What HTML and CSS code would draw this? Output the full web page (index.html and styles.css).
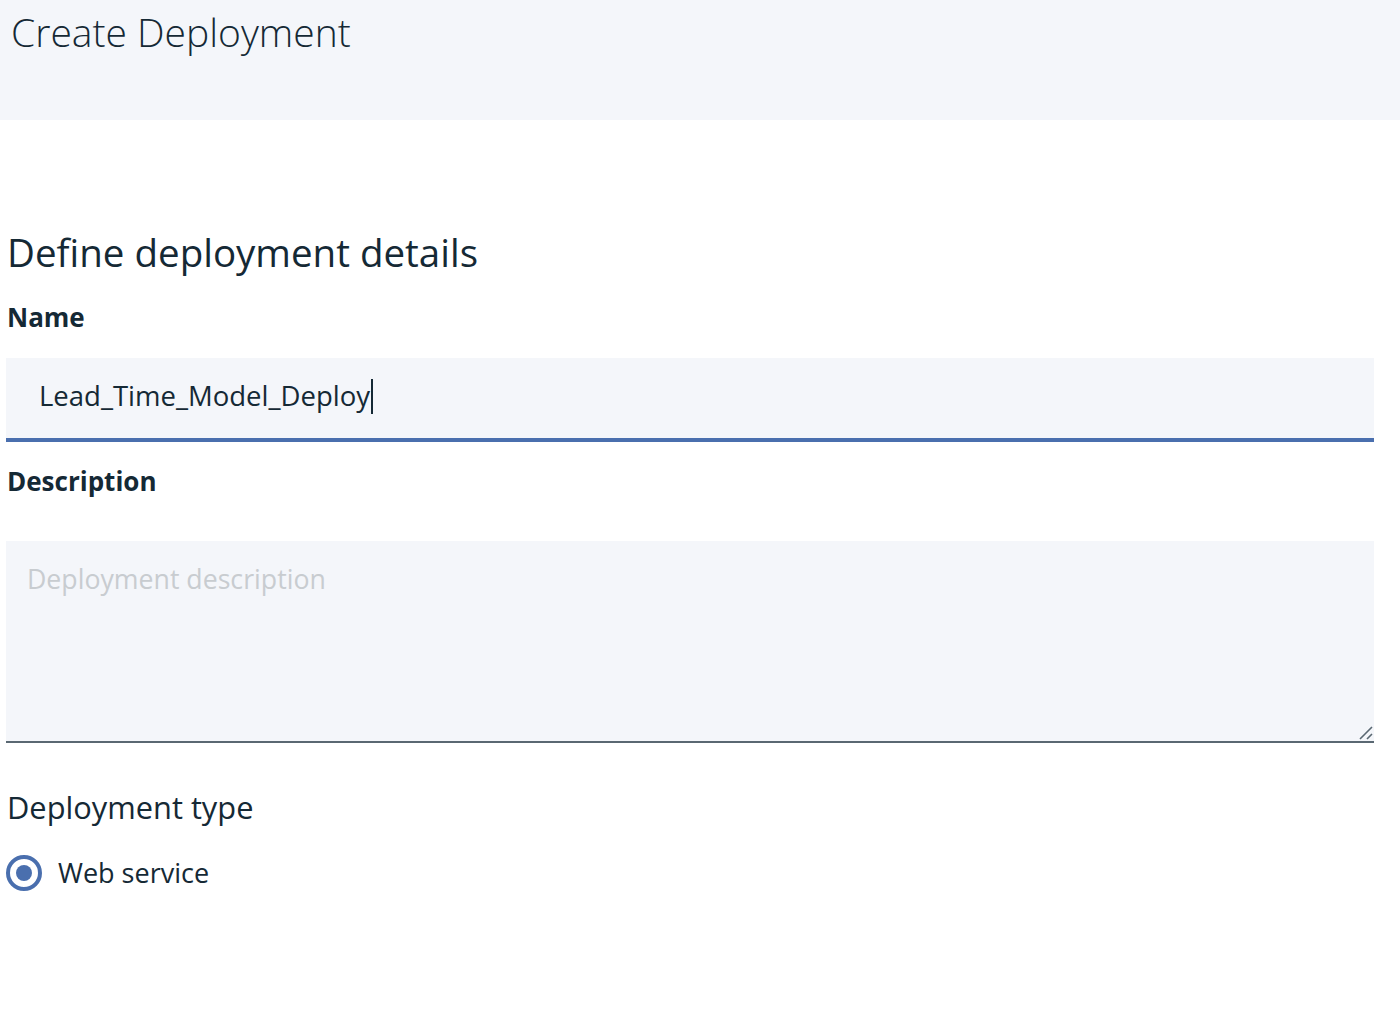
FILE: index.html
```html
<!DOCTYPE html>
<html lang="en">
<head>
<meta charset="utf-8">
<title>Create Deployment</title>
<link rel="stylesheet" href="styles.css">
</head>
<body>
<header class="page-header">
  <h1 class="page-title">Create Deployment</h1>
</header>
<main class="content">
  <h2 class="section-title">Define deployment details</h2>
  <div class="field">
    <label class="field-label" for="name">Name</label>
    <div class="text-input"><span class="input-value">Lead_Time_Model_Deploy</span><span class="caret"></span></div>
  </div>
  <div class="field">
    <label class="field-label" for="desc">Description</label>
    <div class="textarea">
      <span class="placeholder">Deployment description</span>
      <svg class="resize" width="16" height="16" viewBox="0 0 16 16"><path d="M3 15 L15 3 M10 15 L15 10" stroke="#5a6872" stroke-width="1.6" fill="none"/></svg>
    </div>
  </div>
  <h3 class="type-title">Deployment type</h3>
  <div class="radio-row">
    <span class="radio"><span class="radio-dot"></span></span>
    <span class="radio-label">Web service</span>
  </div>
</main>
</body>
</html>
```
FILE: styles.css
```css
* { box-sizing: border-box; }
html, body { margin: 0; padding: 0; background: #ffffff; }
body {
  font-family: "Open Sans", "Noto Sans", "Liberation Sans", sans-serif;
  color: #152935;
  width: 1400px;
  height: 1010px;
  overflow: hidden;
}
.page-header {
  height: 120px;
  background: #f4f6fa;
  padding: 8px 0 0 11px;
}
.page-title {
  margin: 0;
  font-size: 39px;
  font-weight: 300;
  line-height: 48px;
}
.content {
  padding: 106px 26px 0 6px;
}
.section-title {
  margin: 0 0 0 1px;
  font-size: 38.5px;
  font-weight: 400;
  line-height: 52px;
}
.field { display: flex; flex-direction: column; }
.field-label {
  margin: 22px 0 0 1px;
  font-size: 26px;
  font-weight: 700;
  line-height: 34px;
  height: 38px;
}
.text-input {
  margin-top: 20px;
  height: 84px;
  background: #f4f6fa;
  border-bottom: 4px solid #4a6fae;
  display: flex;
  align-items: center;
  padding: 0 0 4px 33px;
  font-size: 27.5px;
}
.input-value { line-height: 36px; }
.caret {
  display: inline-block;
  width: 2px;
  height: 35px;
  background: #152935;
  margin-left: 1px;
}
.field + .field .field-label { margin-top: 22px; }
.textarea {
  position: relative;
  margin-top: 39px;
  height: 202px;
  background: #f4f6fa;
  border-bottom: 2px solid #5a6872;
  padding: 21px 0 0 21px;
}
.placeholder {
  font-size: 26.7px;
  line-height: 34px;
  color: #c8ccd0;
}
.resize {
  position: absolute;
  right: 1px;
  bottom: 1px;
}
.type-title {
  margin: 44px 0 0 1px;
  font-size: 30.8px;
  font-weight: 400;
  line-height: 40px;
}
.radio-row {
  margin-top: 28px;
  display: flex;
  align-items: center;
  gap: 16px;
}
.radio {
  width: 36px;
  height: 36px;
  border-radius: 50%;
  border: 4px solid #4a6fae;
  display: flex;
  align-items: center;
  justify-content: center;
}
.radio-dot {
  width: 16px;
  height: 16px;
  border-radius: 50%;
  background: #4a6fae;
}
.radio-label {
  font-size: 27px;
  line-height: 36px;
}
```
